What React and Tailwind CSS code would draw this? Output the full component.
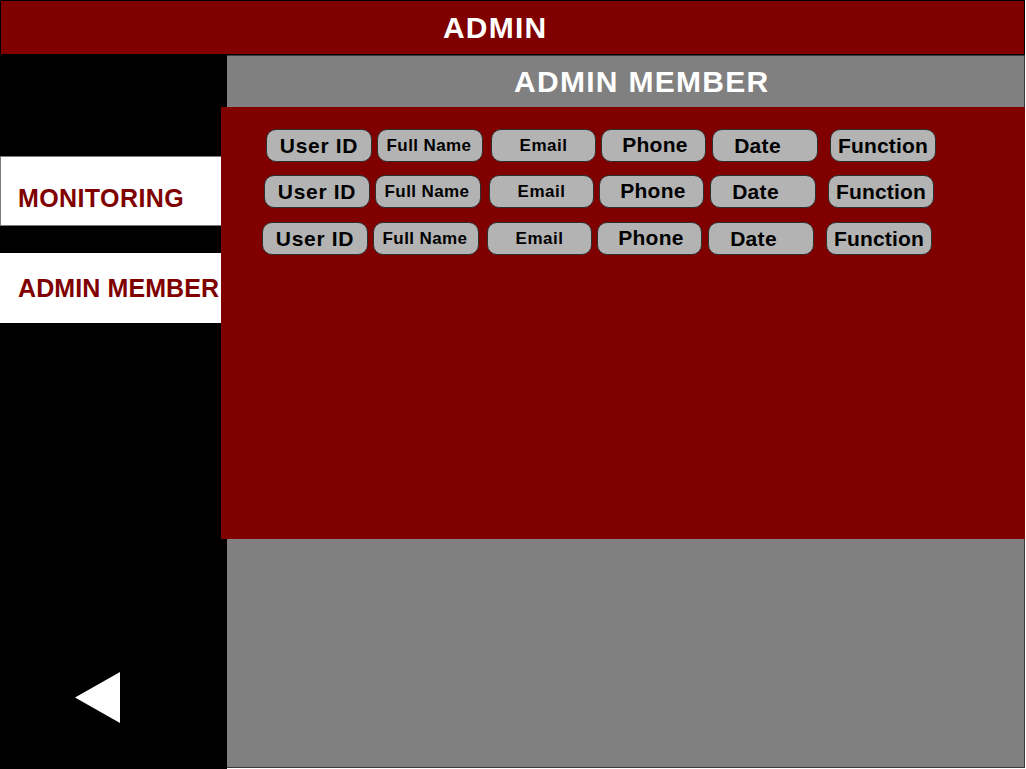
import React from "react";

const rows = [
  { offset: "ml-[45px]", mt: "mt-[22px]" },
  { offset: "ml-[43px]", mt: "mt-[13px]" },
  { offset: "ml-[41px]", mt: "mt-[14px]" },
];

function Btn({ children, className = "", text = "" }) {
  return (
    <div
      className={`h-[33px] shrink-0 rounded-[10px] border border-[#2e2e2e] bg-[#b3b3b3] flex items-center justify-center font-bold text-black leading-none ${className}`}
    >
      <span className={text}>{children}</span>
    </div>
  );
}

function Row({ offset, mt }) {
  return (
    <div className={`flex ${offset} ${mt}`}>
      <Btn className="w-[106px]" text="text-[21px] tracking-[0.7px]">User ID</Btn>
      <Btn className="w-[106px] ml-[5px]" text="text-[17px] tracking-[0.4px] -ml-[2px]">Full Name</Btn>
      <Btn className="w-[105px] ml-[8px]" text="text-[17px] tracking-[0.5px]">Email</Btn>
      <Btn className="w-[105px] ml-[5px]" text="text-[21px] tracking-[0.3px] -mt-[2px] ml-[3px]">Phone</Btn>
      <Btn className="w-[106px] ml-[6px]" text="text-[21px] tracking-[0.3px] mr-[15px]">Date</Btn>
      <Btn className="w-[106px] ml-[12px]" text="text-[21px] tracking-[0.2px]">Function</Btn>
    </div>
  );
}

export default function App() {
  return (
    <div
      className="w-[1026px] h-[769px] bg-white overflow-hidden"
      style={{ fontFamily: '"Liberation Sans", Arial, sans-serif' }}
    >
      {/* Top header */}
      <div className="w-[1025px] h-[55px] bg-[#800000] border border-black flex items-center pl-[442px]">
        <span className="text-white font-bold text-[30px] tracking-[1.2px] leading-none">ADMIN</span>
      </div>

      <div className="flex items-start">
        {/* Sidebar */}
        <div className="w-[227px] h-[714px] bg-black flex flex-col shrink-0">
          <div className="mt-[101px] w-[222px] h-[70px] bg-white border border-[#7a7a7a] border-r-0 flex items-center pl-[17px] pt-[14px]">
            <span className="text-[#800000] font-bold text-[25px] tracking-[0.4px] leading-none">MONITORING</span>
          </div>
          <div className="mt-[27px] w-[222px] h-[70px] bg-white flex items-center pl-[18px]">
            <span className="text-[#800000] font-bold text-[25px] tracking-[0.1px] leading-none whitespace-nowrap">ADMIN MEMBER</span>
          </div>
          <div className="mt-auto mb-[46px] pl-[75px]">
            <svg width="45" height="51" viewBox="0 0 45 51">
              <polygon points="45,0 45,51 0,25.5" fill="#ffffff" />
            </svg>
          </div>
        </div>

        {/* Main */}
        <div className="w-[798px] h-[713px] bg-[#808080] border-t border-r border-b border-[#3a3a3a] flex flex-col">
          <div className="h-[51px] flex items-center pl-[287px]">
            <span className="text-white font-bold text-[30px] tracking-[1.3px] leading-none whitespace-nowrap">ADMIN MEMBER</span>
          </div>
          <div className="-ml-[6px] w-[804px] h-[432px] bg-[#800000] flex flex-col">
            {rows.map((r, i) => (
              <Row key={i} offset={r.offset} mt={r.mt} />
            ))}
          </div>
        </div>
      </div>
    </div>
  );
}
